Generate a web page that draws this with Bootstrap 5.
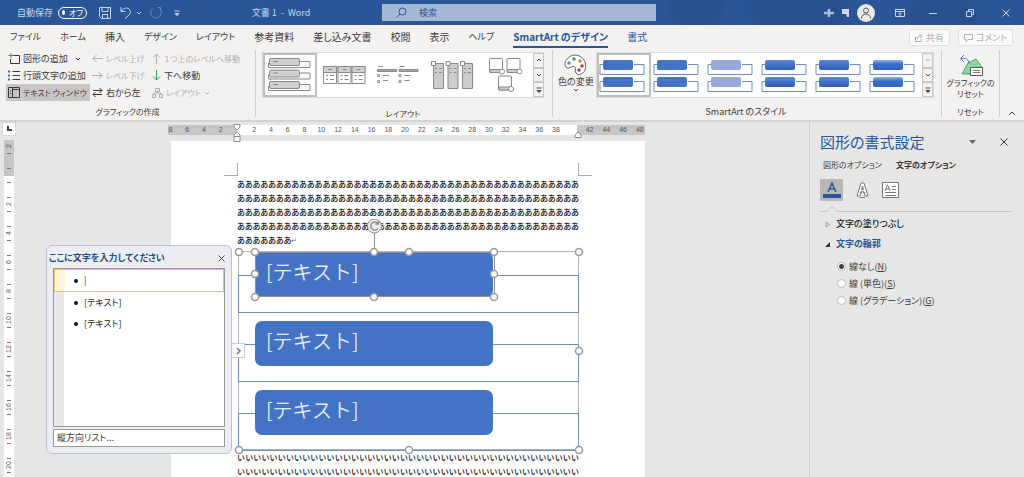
<!DOCTYPE html>
<html lang="ja">
<head>
<meta charset="utf-8">
<meta name="viewport" content="width=device-width, initial-scale=1">
<title>文書 1 - Word</title>
<link href="https://cdn.jsdelivr.net/npm/bootstrap@5.3.0/dist/css/bootstrap.min.css" rel="stylesheet">
<style>
  :root { --word: #2a5699; --chrome: #f3f2f1; --canvas: #e6e6e6; --shape: #4472c4; --ink: #3b3a39; --off: #b1afad; }
  body { font-family: "Noto Sans CJK JP", sans-serif; font-feature-settings: "palt"; font-size: 10px; line-height: 14px; color: var(--ink); background: var(--canvas); }
  button, input { font: inherit; font-feature-settings: inherit; color: inherit; }
  .plain { background: none; border: 0; padding: 0; display: inline-flex; align-items: center; white-space: nowrap; }
  svg { display: block; flex: none; fill: none; stroke: currentColor; }
  .word-app { height: 100vh; overflow: hidden; }

  .titlebar { height: 25px; color: #c9d7ec; font-size: 9px; padding-left: 17px; padding-right: 14px;
    background: radial-gradient(circle at 78% 40%, #28508e 0 40px, transparent 62px), radial-gradient(circle at 68% 20%, #28508e 0 20px, transparent 36px), radial-gradient(circle at 92% 90%, #28508e 0 26px, transparent 44px), var(--word); }
  .doc-side { width: 365px; }
  .autosave { width: 29px; height: 12px; border: 1px solid #fff; border-radius: 6px; color: #fff; font-size: 8px; gap: 4px; padding: 0 3px; margin-left: 5px; }
  .autosave i { width: 5px; height: 5px; border-radius: 50%; background: #fff; }
  .search-box { width: 274px; height: 17px; background: #a5b8d6; color: var(--word); padding-left: 14px; gap: 12px; }
  .search-box input { border: 0; background: none; outline: 0; padding: 0; width: 100%; font-size: 9px; }
  .search-box input::placeholder { color: var(--word); opacity: 1; }
  .avatar { width: 18px; height: 18px; border-radius: 50%; background: #ece9e6; color: #555; }

  .tabs-row { height: 25px; background: var(--chrome); padding-left: 10px; padding-right: 11px; }
  .tabs-row .nav { gap: 19px; }
  .tabs-row .nav-link { padding: 0; color: var(--ink); height: 21px; line-height: 19px; border-bottom: 2px solid transparent; white-space: nowrap; }
  .tabs-row .nav-link.kana { font-size: 9px; }
  .tabs-row .nav-link.context { color: var(--word); }
  .tabs-row .nav-link.active { color: var(--word); font-weight: 700; border-color: var(--word); }
  .chip { height: 17px; border: 1px solid #e3e1df; background: #fafafa; color: var(--off); border-radius: 2px; padding: 0 5px; gap: 3px; font-size: 9px; }

  .ribbon { height: 72px; background: var(--chrome); border-bottom: 2px solid #d4d4d4; font-size: 9px; line-height: 11px; }
  .rgroup { border-right: 1px solid #d2d0ce; margin-bottom: 3px; }
  .rgroup-name { text-align: center; line-height: 12px; }
  .rbody { height: 56px; }
  .g-create { width: 256px; }
  .g-layout { width: 297px; padding: 0 8px 0 6px; }
  .g-style { padding: 0 7px 0 5px; }
  .g-style .rbody { gap: 2px; }
  .g-reset { width: 58px; }
  .commands { display: grid; grid-template-columns: 84px 60px 1fr; grid-auto-rows: 17px; padding-left: 6px; }
  .commands button { gap: 3px; padding-left: 2px; height: 17px; }
  .commands button:disabled { color: var(--off); }
  .commands .pressed { background: #c8c6c4; }
  .kana { font-size: 8px; }
  .gallery { height: 46px; background: #fff; border: 1px solid #dddbd9; margin-top: 2px; }
  .gallery button { padding: 0; border: 2px solid transparent; background: none; width: 54px; color: #888; }
  .gallery button.chosen { border-color: #c0bebc; }
  .scrollers { width: 11px; }
  .gallery .scrollers button { width: 11px; flex: 1; border: 1px solid #c8c6c4; background: var(--chrome); justify-content: center; color: #444; }

  .v-ruler { width: 10px; margin-left: 4px; font-size: 7px; color: #555; background: linear-gradient(#c6c6c6 36px, #fff 36px); font-family: "Liberation Sans", sans-serif; }
  .v-ruler div { height: 15px; border-bottom: 1px solid #777; margin: 0 3px; flex: none; }
  .v-ruler div:nth-child(odd) { height: 14px; }
  .v-ruler span { writing-mode: vertical-rl; transform: rotate(180deg); display: flex; justify-content: center; align-items: center; width: 10px; height: 13px; margin-left: -3px; line-height: 10px; }
  .left-rail { width: 17px; }
  .tabstop { width: 14px; height: 14px; margin: 0 0 4px 2px; background: #fff; border: 1px solid #d6d6d6; color: #444; justify-content: center; }
  .canvas { padding-right: 10px; min-width: 0; }
  .sheet-col { width: 474px; }
  .h-ruler { height: 10px; margin: 3px -3px 6px -9px; font: 7px/10px "Liberation Sans", sans-serif; color: #555; text-align: center;
    background: linear-gradient(90deg, transparent 6px, #c6c6c6 6px 75px, #fff 75px 415px, #c6c6c6 415px 483px, transparent 483px); position: relative; }
  .h-ruler span { flex: 1 1 0; width: 0; }
  .h-ruler svg { position: absolute; top: -1px; color: #888; }
  .sheet { background: #fff; padding: 22px 53px 0; }
  .crop { height: 13px; margin-bottom: 1px; }
  .crop i { width: 14px; border: solid #aaa; border-width: 0 1px 1px 0; }
  .crop i + i { border-width: 0 0 1px 1px; }
  .body-text { margin: 0 13px; width: 342px; font-size: 8px; line-height: 14px; color: #111; font-weight: 500; }
  .body-text p { margin: 0; }
  .body-text .full { text-align: justify; text-align-last: justify; }
  .body-text.wide { font-feature-settings: normal; }

  .smartart { width: 341px; height: 199px; margin: 4px 14px 1px; border: 1px solid #b3b3b3; position: relative; }
  .node { display: grid; height: 61px; margin-bottom: 8px; }
  .node:last-of-type { margin: 0; }
  .node > * { grid-area: 1 / 1; }
  .node i { margin: 23px -1px 0; border: 1px solid #6e8db8; }
  .node span { position: relative; margin-left: 16px; width: 238px; height: 45px; border-radius: 7px; background: var(--shape); color: #e3ebf7; font-size: 20px; line-height: 40px; padding-left: 11px; font-weight: 350; font-feature-settings: normal; }
  .handles { position: absolute; left: -7px; top: -33px; }
  .pane-toggle { position: absolute; left: -8px; top: 91px; width: 14px; height: 15px; border: 1px solid #ccc; background: #fff; justify-content: center; color: #777; }

  .text-pane { position: absolute; left: 46px; top: 123px; width: 186px; height: 209px; border: 1px solid #b9c2cf; border-radius: 6px; background: #ebedf3; padding: 5px 6px 6px; font-size: 9px; line-height: 12px; }
  .text-pane h2 { font-size: 9px; line-height: 14px; margin: 0 0 0 -4px; font-weight: 700; color: #1f4e85; }
  .entries { margin: 3px 0 2px; border: 1px solid #999; background: linear-gradient(90deg, #e9e9e9 10px, #fff 10px); padding: 0; list-style: none; color: #222; }
  .entries li { height: 21px; display: flex; align-items: center; gap: 6px; padding-left: 20px; }
  .entries li::before { content: ""; width: 4px; height: 4px; border-radius: 50%; background: #111; }
  .entries li.current { height: 23px; border: 1px solid #e3c565; background: linear-gradient(90deg, #fff6d8 10px, #fff 10px) padding-box; padding-left: 19px; }
  .entries input { border: 0; padding: 0; background: none; outline: 0; width: 120px; height: 12px; }
  .layout-name { border: 1px solid #999; background: #fff; height: 18px; line-height: 16px; padding-left: 3px; }

  .format-pane { width: 215px; border-left: 1px solid #cfcfcf; padding: 10px 12px 0 10px; font-size: 9px; line-height: 12px; }
  .format-pane h1 { font-size: 15px; line-height: 20px; margin: 0; color: var(--word); font-weight: 400; }
  .option-tabs { gap: 14px; margin: 7px 0 8px 3px; font-size: 8px; }
  .option-icons { height: 22px; gap: 13px; }
  .option-icons .pressed { background: #b8b8b8; width: 23px; height: 22px; justify-content: center; }
  .sect { gap: 5px; height: 20px; margin-left: 5px; font-weight: 500; color: #222; }
  .sect.open { color: var(--word); font-weight: 700; }
  .choice { height: 17px; gap: 3px; margin-left: 17px; }
  .choice input { appearance: none; width: 9px; height: 9px; margin: 0; border: 1px solid #bbb; border-radius: 50%; background: #fff; flex: none; }
  .choice input:checked { background: radial-gradient(#444 0 2px, #fff 3px); }
</style>
</head>
<body>
<svg width="0" height="0" class="position-absolute" aria-hidden="true">
  <symbol id="chev" viewBox="0 0 6 6"><path d="M1 2l2 2 2-2"/></symbol>
  <symbol id="chevup" viewBox="0 0 6 6"><path d="M1 4l2-2 2 2"/></symbol>
  <symbol id="more" viewBox="0 0 6 6"><path d="M0.500 1h5M1 3.500l2 2 2-2z" fill="currentColor"/></symbol>
  <symbol id="cross" viewBox="0 0 8 8"><path d="M0.500 0.500l7 7M7.500 0.500l-7 7"/></symbol>
  <symbol id="pair" viewBox="0 0 50 40">
    <path d="M35 9.500h10v10H1v-10h3M35 26.500h10v10H1v-10h3" fill="none" stroke="#6a8fc0"/>
    <rect x="4" y="5" width="30" height="10" rx="2" stroke="none"/><rect x="4" y="22" width="30" height="10" rx="2" stroke="none"/>
  </symbol>
  <linearGradient id="deep" x1="0" y1="0" x2="0" y2="1"><stop offset="0" stop-color="#5b86d8"/><stop offset="1" stop-color="#2f5cb5"/></linearGradient>
  <linearGradient id="gloss" x1="0" y1="0" x2="0" y2="1"><stop offset="0" stop-color="#8fb2ec"/><stop offset=".4" stop-color="#3a6fd0"/><stop offset="1" stop-color="#3463bd"/></linearGradient>
</svg>

<div class="word-app d-flex flex-column">
  <header class="titlebar d-flex align-items-center flex-shrink-0">
    <div class="doc-side d-flex align-items-center flex-shrink-0">
      <span>自動保存</span>
      <button class="plain autosave" aria-label="自動保存の切り替え"><i></i>オフ</button>
      <button class="plain ms-2 ps-1" aria-label="保存"><svg width="12" height="12" viewBox="0 0 12 12"><path d="M.5.5h11v11h-9l-2-2zM3 .5v4h6v-4M3.500 11.500v-4h5v4"/></svg></button>
      <button class="plain ms-2 gap-1" aria-label="元に戻す"><svg width="13" height="13" viewBox="0 0 13 13"><path d="M2 1v4.500h4.500M2 5.500C5 1.500 8 1.500 10 3s2 5-1 7l-3 2.500"/></svg><svg width="6" height="6"><use href="#chev"/></svg></button>
      <button class="plain ms-2" aria-label="やり直し"><svg width="12" height="12" viewBox="0 0 12 12" opacity=".4"><path d="M7.500.5h3v3M10 1c2 3 1.500 7-1 9s-6 1-7.500-1.500S1 3 3 1.500"/></svg></button>
      <button class="plain ms-2 ps-1" aria-label="カスタマイズ"><svg width="6" height="6"><use href="#more"/></svg></button>
      <span class="mx-auto">文書 1&nbsp; -&nbsp; Word</span>
    </div>
    <label class="search-box d-flex align-items-center"><svg width="11" height="11" viewBox="0 0 11 11"><circle cx="6.500" cy="4.500" r="3.500"/><path d="M4 7L.5 10.500"/></svg><input type="search" placeholder="検索" aria-label="検索"></label>
    <div class="d-flex align-items-center ms-auto">
      <svg width="10" height="10" viewBox="0 0 10 10"><path d="M0 5h10M5 1v8" stroke-width="2.500" opacity=".8"/></svg>
      <svg class="ms-2 me-1" width="7" height="8" viewBox="0 0 7 8"><path d="M0 0h7v8H5L4 5H0z" fill="currentColor" stroke="none"/></svg>
      <button class="plain avatar ms-1 justify-content-center" aria-label="アカウント"><svg width="12" height="12" viewBox="0 0 12 12"><circle cx="6" cy="3.500" r="2.500"/><path d="M1.500 11.500c0-6 9-6 9 0"/></svg></button>
      <button class="plain ms-3 ps-1" aria-label="リボンの表示オプション"><svg width="10" height="8" viewBox="0 0 10 8"><path d="M.5.500h9v7h-9zM.5 2.500h9M5 7V4M3.500 5L5 3.500 6.500 5"/></svg></button>
      <button class="plain ms-4" aria-label="最小化"><svg width="9" height="8" viewBox="0 0 9 8"><path d="M0 4.500h8"/></svg></button>
      <button class="plain mx-4 px-1" aria-label="元に戻す (縮小)"><svg width="8" height="8" viewBox="0 0 8 8"><path d="M.5 2.500h5v5h-5zM2.500 2V.5h5v5H6"/></svg></button>
      <button class="plain" aria-label="閉じる"><svg width="8" height="8"><use href="#cross"/></svg></button>
    </div>
  </header>

  <div class="tabs-row d-flex align-items-center flex-shrink-0">
    <nav class="nav flex-nowrap">
      <a class="nav-link kana" href="#">ファイル</a><a class="nav-link kana" href="#">ホーム</a><a class="nav-link" href="#">挿入</a><a class="nav-link kana" href="#">デザイン</a><a class="nav-link kana" href="#">レイアウト</a><a class="nav-link" href="#">参考資料</a><a class="nav-link" href="#">差し込み文書</a><a class="nav-link" href="#">校閲</a><a class="nav-link" href="#">表示</a><a class="nav-link kana" href="#">ヘルプ</a><a class="nav-link active" href="#">SmartArt のデザイン</a><a class="nav-link context" href="#">書式</a>
    </nav>
    <div class="d-flex gap-2 ms-auto">
      <button class="plain chip"><svg width="8" height="8" viewBox="0 0 8 8"><path d="M2 3H.5v4.500h6V5M2.500 5c0-2 1-3 3-3M4.500.5L7 2 5 4"/></svg>共有</button>
      <button class="plain chip"><svg width="9" height="8" viewBox="0 0 9 8"><path d="M.5.5h8v5H4l-2 2v-2H.500z"/></svg>コメント</button>
    </div>
  </div>

  <div class="ribbon d-flex flex-shrink-0">
    <section class="rgroup g-create flex-shrink-0">
      <div class="rbody commands">
        <button class="plain"><svg width="12" height="12" viewBox="0 0 12 12"><path d="M5 2.500h6.500v8h-9V6"/><path d="M3 0v5M.5 2.500h5" stroke="#3a9a5b"/></svg>図形の追加<svg class="ms-1" width="6" height="6"><use href="#chev"/></svg></button>
        <button class="plain kana" disabled><svg width="11" height="9" viewBox="0 0 11 9"><path d="M11 4.500H1M4.500 1L1 4.500 4.500 8"/></svg>レベル上げ</button>
        <button class="plain kana" disabled><svg width="9" height="11" viewBox="0 0 9 11"><path d="M4.500 11V1M1 4.500L4.500 1 8 4.500"/></svg>１つ上のレベルへ移動</button>
        <button class="plain"><svg width="12" height="11" viewBox="0 0 12 11"><path d="M4.500 1.500H12M4.500 5.500H12M4.500 9.500H12"/><path d="M0 1.500h2M0 5.500h2M0 9.500h2" stroke="#2a6fc0" stroke-width="2"/></svg>行頭文字の追加</button>
        <button class="plain kana" disabled><svg width="11" height="9" viewBox="0 0 11 9"><path d="M0 4.500h10M6.500 1L10 4.500 6.500 8"/></svg>レベル下げ</button>
        <button class="plain"><svg width="9" height="11" viewBox="0 0 9 11"><path d="M4.500 0v10M1 6.500L4.500 10 8 6.500" stroke="#2f9e57"/></svg>下へ移動</button>
        <button class="plain pressed kana"><svg width="12" height="11" viewBox="0 0 12 11"><path d="M.5.5h11v10H.5zM4.500.5v10M5 2.500h6M2 4h1M2 6.500h1"/></svg>テキスト ウィンドウ</button>
        <button class="plain"><svg width="11" height="11" viewBox="0 0 11 11"><path d="M1 3.500h9M7.500 1L10 3.500 7.500 6M10 7.500H1M3.500 5L1 7.500 3.500 10"/></svg>右から左</button>
        <button class="plain kana" disabled><svg width="11" height="10" viewBox="0 0 11 10"><path d="M3.500.5h4v3h-4zM.5 6.500h3v3h-3zM7.500 6.500h3v3h-3zM5.500 4v1M2 6V5h7v1"/></svg>レイアウト<svg width="6" height="6"><use href="#chev"/></svg></button>
      </div>
      <div class="rgroup-name kana">グラフィックの作成</div>
    </section>

    <section class="rgroup g-layout flex-shrink-0">
      <div class="rbody">
        <div class="gallery d-flex">
          <button class="chosen" aria-label="縦方向リスト"><svg width="50" height="40" viewBox="0 0 50 40"><g id="lst"><path d="M35 6.500h10v6H5M3.500 8v4.500h3"/><rect x="4.500" y="3.500" width="30" height="7" rx="1.500" fill="#d0d0d0"/><path d="M8 6.500h5"/></g><use href="#lst" y="11.500"/><use href="#lst" y="23"/></svg></button>
          <button aria-label="表形式リスト"><svg width="50" height="40" viewBox="0 0 50 40"><g id="tcol"><path d="M4.500 11.500h13v17h-13z" fill="#fff"/><path d="M4.500 11.500h13v6h-13z" fill="#d0d0d0"/><path d="M9 14.500h4M7 20.500h2M7 24.500h2M11 20.500h4M11 24.500h4"/></g><use href="#tcol" x="14.500"/><use href="#tcol" x="28.500"/></svg></button>
          <button aria-label="見出しリスト"><svg width="50" height="40" viewBox="0 0 50 40"><g id="hcol"><path d="M4.500 14.500h19v2h-19z" fill="#aaa"/><path d="M5 11.500h5M4.500 19.500h2v2h-2zM4.500 25.500h2v2h-2zM10 20.500h6M10 25.500h5"/></g><use href="#hcol" x="21.500"/></svg></button>
          <button aria-label="柱状リスト"><svg width="50" height="40" viewBox="0 0 50 40"><g id="pcol"><path d="M6.500 8.500h10v25h-10z" fill="#ccc"/><path d="M4.500 6.500h4v4h-4z" fill="#fff"/><path d="M8 13.500h2M12 13.500h3M8 17.500h2M12 17.500h3"/></g><use href="#pcol" x="14.500"/><use href="#pcol" x="29"/></svg></button>
          <button aria-label="画像リスト"><svg width="50" height="40" viewBox="0 0 50 40"><g id="pic"><rect x="8.500" y="3.500" width="13" height="14" rx="1" fill="#fff"/><path d="M9 14.500h12v3H9z" fill="#ccc"/><circle cx="21" cy="16.500" r="2.500" fill="#fff"/></g><use href="#pic" x="17.500"/><use href="#pic" x="9" y="17.500"/></svg></button>
          <div class="scrollers d-flex flex-column ms-auto"><button class="plain" aria-label="上へ"><svg width="6" height="6"><use href="#chevup"/></svg></button><button class="plain" aria-label="下へ"><svg width="6" height="6"><use href="#chev"/></svg></button><button class="plain" aria-label="その他"><svg width="6" height="6"><use href="#more"/></svg></button></div>
        </div>
      </div>
      <div class="rgroup-name kana">レイアウト</div>
    </section>

    <section class="rgroup g-style flex-grow-1">
      <div class="rbody d-flex">
        <button class="plain flex-column pt-1"><svg width="23" height="22" viewBox="0 0 23 22"><path d="M17 20c5-2 6-9 3-14S9-1 4 4 1 14 4 14s5-3 7-1-1 4 1 6 3 2 5 1z" fill="#fff" stroke="#666"/><g stroke="none"><circle cx="5" cy="9" r="1.700" fill="#4a8fd0"/><circle cx="10" cy="5" r="1.700" fill="#3a9a5b"/><circle cx="16" cy="7" r="1.700" fill="#e08030"/><circle cx="18" cy="12" r="1.700" fill="#c33"/><circle cx="15" cy="16" r="1.700" fill="#83a"/></g></svg><span>色の変更</span><svg width="6" height="6"><use href="#chev"/></svg></button>
        <div class="gallery d-flex flex-grow-1">
          <button class="chosen" aria-label="シンプル"><svg width="50" height="40" style="fill:#4472c4"><use href="#pair"/></svg></button>
          <button aria-label="白枠"><svg width="50" height="40" style="fill:#4472c4"><use href="#pair"/></svg></button>
          <button aria-label="淡色"><svg width="50" height="40" style="fill:#98a8d8"><use href="#pair"/></svg></button>
          <button aria-label="グラデーション"><svg width="50" height="40" style="fill:url(#deep)"><use href="#pair"/></svg></button>
          <button aria-label="強調"><svg width="50" height="40" style="fill:url(#deep)"><use href="#pair"/></svg></button>
          <button aria-label="光沢"><svg width="50" height="40" style="fill:url(#gloss)"><use href="#pair"/></svg></button>
          <div class="scrollers d-flex flex-column ms-auto"><button class="plain" disabled aria-label="上へ"><svg width="6" height="6" opacity=".4"><use href="#chevup"/></svg></button><button class="plain" aria-label="下へ"><svg width="6" height="6"><use href="#chev"/></svg></button><button class="plain" aria-label="その他"><svg width="6" height="6"><use href="#more"/></svg></button></div>
        </div>
      </div>
      <div class="rgroup-name">SmartArt のスタイル</div>
    </section>

    <section class="rgroup g-reset text-center flex-shrink-0">
      <div class="rbody d-flex justify-content-center align-items-start">
        <button class="plain flex-column pt-1 kana"><svg width="24" height="23" viewBox="0 0 24 23"><path d="M3 20L9 9l8-4 6 8-3 7z" fill="#8fd3a4" stroke="#4aa868"/><path d="M11.500 13.500h12v8h-12z" fill="#fff" stroke="#555"/><path d="M14 16.500h7M14 18.500h7" stroke="#777"/><path d="M5 1L1.500 4.500 5 8M2 4.500c5-1 8 1 8 5" stroke="#3a7fc8"/></svg><span>グラフィックの<br>リセット</span></button>
      </div>
      <div class="rgroup-name kana">リセット</div>
    </section>
    <div class="d-flex align-items-end px-2 pb-1 flex-shrink-0"><button class="plain" aria-label="リボンを折りたたむ"><svg width="8" height="6" viewBox="0 0 8 6"><path d="M1 5l3-3 3 3"/></svg></button></div>
  </div>

  <main class="d-flex flex-grow-1 position-relative overflow-hidden">
    <div class="left-rail d-flex flex-column flex-shrink-0">
      <button class="plain tabstop" aria-label="タブの種類"><svg width="5" height="5" viewBox="0 0 5 5"><path d="M1 0v4h4" stroke-width="2"/></svg></button>
      <div class="v-ruler d-flex flex-column flex-grow-1 overflow-hidden">
        <div><span>2</span></div><div></div><div></div><div></div><div><span>2</span></div><div></div><div><span>4</span></div><div></div><div><span>6</span></div><div></div><div><span>8</span></div><div></div><div><span>10</span></div><div></div><div><span>12</span></div><div></div><div><span>14</span></div><div></div><div><span>16</span></div><div></div><div><span>18</span></div><div></div><div><span>20</span></div><div></div>
      </div>
    </div>

    <div class="canvas flex-grow-1 d-flex justify-content-center">
      <div class="sheet-col d-flex flex-column">
        <div class="h-ruler d-flex flex-shrink-0">
          <span>8</span><span>6</span><span>4</span><span>2</span><span></span><span>2</span><span>4</span><span>6</span><span>8</span><span>10</span><span>12</span><span>14</span><span>16</span><span>18</span><span>20</span><span>22</span><span>24</span><span>26</span><span>28</span><span>30</span><span>32</span><span>34</span><span>36</span><span>38</span><span></span><span>42</span><span>44</span><span>46</span><span>48</span>
          <svg width="8" height="18" viewBox="0 0 8 18" style="left:71px"><path d="M1 .5h6V3L4 6 1 3zM1 12.500V11l3-3 3 3v6.500H1zM1 12.500h6" fill="#fff"/></svg>
          <svg width="8" height="18" viewBox="0 0 8 18" style="left:412px"><path d="M1 13.500V11l3-3 3 3v2.500z" fill="#fff"/></svg>
        </div>
        <article class="sheet flex-grow-1">
          <div class="crop d-flex justify-content-between"><i></i><i></i></div>
          <div class="body-text">
            <p class="full">ああああああああああああああああああああああああああああああああああああああああああああ</p>
            <p class="full">ああああああああああああああああああああああああああああああああああああああああああああ</p>
            <p class="full">ああああああああああああああああああああああああああああああああああああああああああああ</p>
            <p class="full">ああああああああああああああああああああああああああああああああああああああああああああ</p>
            <p>あああああああ<small class="text-secondary">↵</small></p>
          </div>
          <div class="smartart">
            <div class="node"><i></i><span>[テキスト]</span></div>
            <div class="node"><i></i><span>[テキスト]</span></div>
            <div class="node"><i></i><span>[テキスト]</span></div>
            <svg class="handles" width="354" height="240" viewBox="0 0 354 240"><g stroke="#8f8f8f" fill="none"><path d="M142.500 14v20M23.500 33.500h239v44h-239z"/><circle cx="142.500" cy="7" r="7" fill="#ededed"/><path d="M146 4.500a4 4 0 1 0 0 5M146.500 2v3h-3" stroke-width="1.500"/></g>
              <g fill="#fff" stroke="#999" stroke-width="1.500"><circle cx="7" cy="33" r="3.500"/><circle cx="177" cy="33" r="3.500"/><circle cx="347" cy="33" r="3.500"/><circle cx="347" cy="132" r="3.500"/><circle cx="7" cy="231" r="3.500"/><circle cx="177" cy="231" r="3.500"/><circle cx="347" cy="231" r="3.500"/><circle cx="23" cy="33" r="3.500"/><circle cx="142" cy="33" r="3.500"/><circle cx="262" cy="33" r="3.500"/><circle cx="23" cy="55" r="3.500"/><circle cx="262" cy="55" r="3.500"/><circle cx="23" cy="78" r="3.500"/><circle cx="142" cy="78" r="3.500"/><circle cx="262" cy="78" r="3.500"/></g></svg>
            <button class="plain pane-toggle" aria-label="テキスト ウィンドウを閉じる"><svg width="5" height="8" viewBox="0 0 5 8"><path d="M1 1l3 3-3 3" stroke-width="1.500"/></svg></button>
          </div>
          <div class="body-text wide">
            <p class="full">いいいいいいいいいいいいいいいいいいいいいいいいいいいいいいいいいいいいいいいいいい</p>
            <p class="full">いいいいいいいいいいいいいいいいいいいいいいいいいいいいいいいいいいいいいいいいいい</p>
          </div>
        </article>
      </div>
    </div>

    <section class="text-pane d-flex flex-column">
      <div class="d-flex justify-content-between align-items-center"><h2>ここに文字を入力してください</h2><button class="plain" aria-label="閉じる"><svg width="7" height="7" viewBox="0 0 8 8"><use href="#cross"/></svg></button></div>
      <ul class="entries flex-grow-1"><li class="current"><input aria-label="項目 1" value="|"></li><li>[テキスト]</li><li>[テキスト]</li></ul>
      <div class="layout-name">縦方向リスト...</div>
    </section>

    <aside class="format-pane flex-shrink-0">
      <div class="d-flex align-items-center"><h1 class="me-auto">図形の書式設定</h1><button class="plain" aria-label="作業ウィンドウのオプション"><svg width="7" height="4" viewBox="0 0 7 4"><path d="M0 0h7L3.500 4z" fill="#666" stroke="none"/></svg></button><button class="plain ms-4 me-1" aria-label="閉じる"><svg width="8" height="8"><use href="#cross"/></svg></button></div>
      <div class="option-tabs d-flex"><button class="plain">図形のオプション</button><button class="plain fw-bold">文字のオプション</button></div>
      <div class="option-icons d-flex align-items-center">
        <button class="plain pressed" aria-label="文字の塗りつぶしと輪郭"><svg width="18" height="18" viewBox="0 0 18 18"><path d="M5 11L9 2l4 9M6.500 8h5" stroke="#2a5699" stroke-width="1.500"/><path d="M0 13h18v4H0z" fill="#2a5699" stroke="none"/></svg></button>
        <button class="plain" aria-label="文字の効果"><svg width="13" height="17" viewBox="0 0 13 17"><path d="M1 14L5 1h3l4 13H9L8 10H5l-1 4zM5.500 7.500h2L6.500 4zM4 11c1-2 4-2 5 0M4 15.500h5" fill="#fff" stroke="#777"/></svg></button>
        <button class="plain" aria-label="レイアウトとプロパティ"><svg width="17" height="16" viewBox="0 0 17 16"><path d="M.5.5h16v15H.5z" fill="#fff" stroke="#777"/><path d="M3 9l2.500-6L8 9M4 7h3M10 4.500h4M10 7.500h4M3 10.500h11M3 13.500h11" stroke="#777"/></svg></button>
      </div>
      <svg class="mt-1" width="192" height="9" viewBox="0 0 192 9"><path d="M0 6.500h7l5-5 5 5h175" stroke="#c6c6c6"/></svg>
      <button class="plain sect d-flex"><svg width="6" height="7" viewBox="0 0 6 7"><path d="M1 1l3.500 2.500L1 6z" stroke="#999"/></svg>文字の塗りつぶし</button>
      <button class="plain sect open d-flex"><svg width="6" height="7" viewBox="0 0 6 7"><path d="M5 1v5H0z" fill="#333" stroke="none"/></svg>文字の輪郭</button>
      <div class="pt-1">
        <label class="choice d-flex align-items-center"><input type="radio" name="line" checked><span>線なし(<u>N</u>)</span></label>
        <label class="choice d-flex align-items-center"><input type="radio" name="line"><span>線 (単色)(<u>S</u>)</span></label>
        <label class="choice d-flex align-items-center"><input type="radio" name="line"><span>線 (グラデーション)(<u>G</u>)</span></label>
      </div>
    </aside>
  </main>
</div>
<script src="https://cdn.jsdelivr.net/npm/bootstrap@5.3.0/dist/js/bootstrap.bundle.min.js"></script>
</body>
</html>
